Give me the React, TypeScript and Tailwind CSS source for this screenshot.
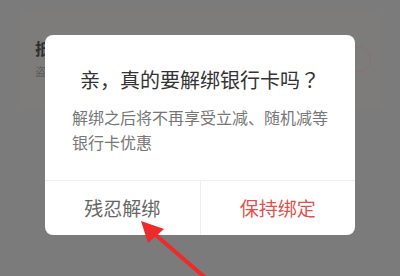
import React from 'react';

const cjk = { fontFamily: '"Noto Sans CJK SC", "Noto Sans", sans-serif' };
const tc = { fontFamily: '"Noto Sans CJK TC", sans-serif' };

function Arrow() {
  return (
    <svg className="pointer-events-none absolute left-0 top-0" width="400" height="276" viewBox="0 0 400 276">
      <line x1="208" y1="280" x2="150" y2="230" stroke="#ee2b2b" strokeWidth="4" strokeLinecap="round" />
      <polygon points="141,221 164,229 148,243" fill="#ee2b2b" />
    </svg>
  );
}

export default function App() {
  return (
    <div className="relative h-[276px] w-[400px] overflow-hidden bg-[#7b7b7b]" style={cjk}>
      {/* dimmed page behind */}
      <div className="ml-[20px] mr-[18px] pt-[10px]">
        <div className="flex h-[97px] items-center justify-between bg-[#7e7b7b] pl-[15px] pr-[11px]">
          <div className="flex flex-col gap-[10px]">
            <span className="text-[16px] font-bold leading-none text-[#2e2e2e]">抵</span>
            <span className="text-[11px] leading-none text-[#5c5c5c]">盗</span>
          </div>
          <div className="h-[26px] w-[26px] rounded-full border border-[#8b6f75]" />
        </div>
      </div>

      {/* dialog */}
      <div className="absolute left-[45px] top-[35px] flex h-[200px] w-[310px] flex-col rounded-[8px] bg-white">
        <div className="pt-[31px] text-center text-[20px] leading-[28px] text-[#333333]">
          亲，真的要解绑银行卡吗<span style={tc}>？</span>
        </div>
        <div className="px-[27px] pt-[11px] text-[16px] leading-[25px] text-[#777777]">
          解绑之后将不再享受立减、随机减等银行卡优惠
        </div>
        <div className="mt-auto flex h-[55px] border-t border-[#eeeeee]">
          <div className="flex flex-1 items-center justify-center border-r border-[#eeeeee] text-[19px] text-[#666666]">
            残忍解绑
          </div>
          <div className="flex flex-1 items-center justify-center text-[19px] text-[#e0524e]">
            保持绑定
          </div>
        </div>
      </div>

      <Arrow />
    </div>
  );
}
